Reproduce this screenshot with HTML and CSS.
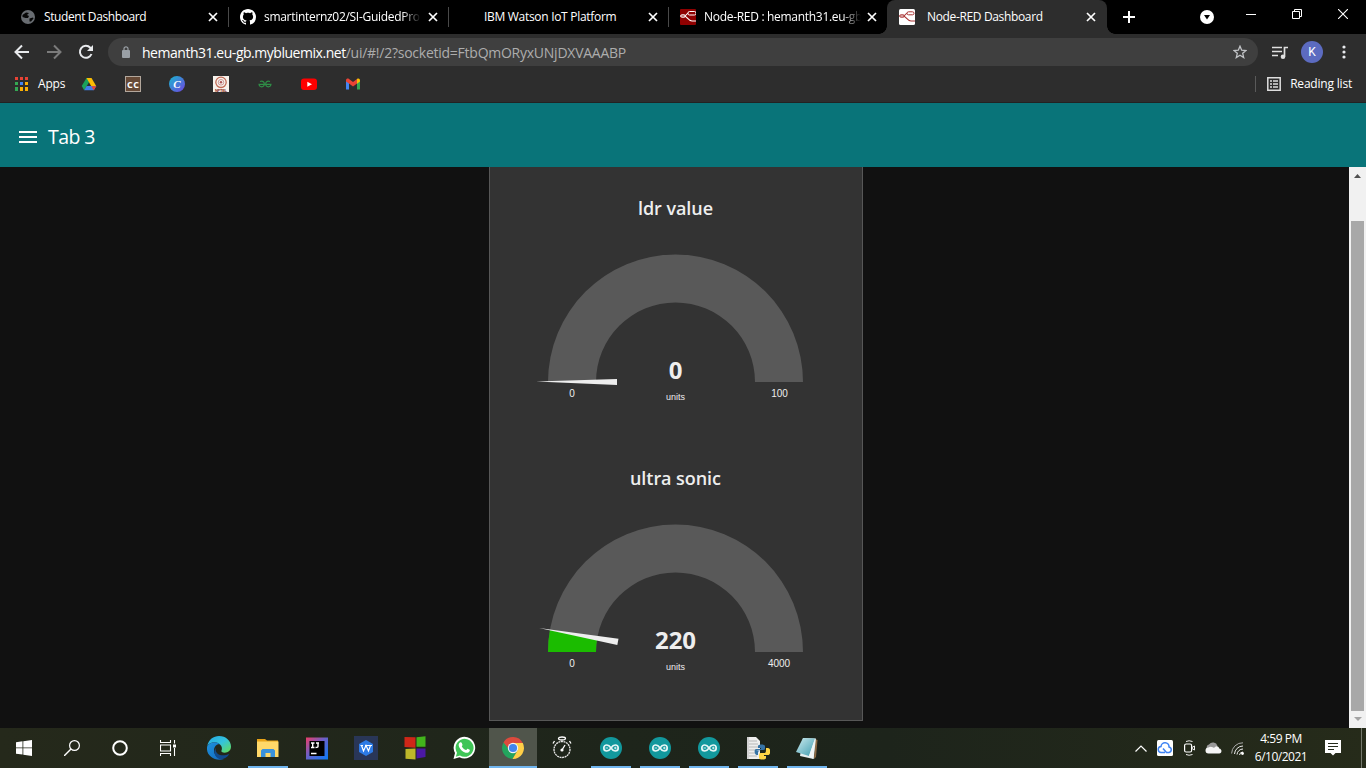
FILE: index.html
```html
<!DOCTYPE html>
<html lang="en">
<head>
<meta charset="utf-8">
<title>Node-RED Dashboard</title>
<link rel="stylesheet" href="styles.css">
</head>
<body>
<svg width="0" height="0" class="defs">
  <defs>
    <symbol id="close" viewBox="0 0 16 16"><path d="M4 4l8 8M12 4l-8 8" stroke="#fff" stroke-width="1.7" fill="none"/></symbol>
    <symbol id="arduino" viewBox="0 0 24 24"><circle cx="12" cy="12" r="11" fill="#12989d"/><path d="M12 12C10.500 9.700 9.200 9 7.800 9a3 3 0 0 0 0 6c1.400 0 2.700-.7 4.200-3s2.700-3 4.200-3a3 3 0 0 1 0 6c-1.500 0-2.700-.7-4.200-3z" fill="none" stroke="#e6f6f6" stroke-width="1.7"/><path d="M6.500 12h2.600M15 12h2.600M16.300 10.700v2.600" stroke="#e6f6f6" stroke-width=".9"/></symbol>
    <linearGradient id="edgeTop" x1="0" y1="0" x2="1" y2="1"><stop offset="0" stop-color="#24a8e4"/><stop offset=".5" stop-color="#34c3dd"/><stop offset="1" stop-color="#67e04f"/></linearGradient>
    <linearGradient id="edgeLow" x1="0" y1="0" x2="1" y2="1"><stop offset="0" stop-color="#1e91dc"/><stop offset="1" stop-color="#1268bd"/></linearGradient>
    <linearGradient id="canva" x1="0" y1="0" x2="1" y2="1"><stop offset="0" stop-color="#17b8cf"/><stop offset="1" stop-color="#7142e0"/></linearGradient>
    <linearGradient id="ij" x1="0" y1="0" x2="1" y2="1"><stop offset="0" stop-color="#ee3d68"/><stop offset=".45" stop-color="#6a60c8"/><stop offset="1" stop-color="#087cfa"/></linearGradient>
    <linearGradient id="note" x1="0" y1="0" x2="1" y2="1"><stop offset="0" stop-color="#cdebef"/><stop offset="1" stop-color="#3e9db0"/></linearGradient>
  </defs>
</svg>

<div class="tabstrip">
  <div class="tab">
    <svg class="fav" viewBox="0 0 16 16"><circle cx="8" cy="8" r="7" fill="#686c71"/><path d="M2.500 6l3.500-2.500 3 .5-2 2 2 1-1 2-2.500 0-3-1zM9.500 9.500l3.500-1 .5 1-2.500 3-1.500 0z" fill="#070707"/></svg>
    <span class="tab-title first">Student Dashboard</span><svg class="fav"><use href="#close"/></svg>
  </div>
  <div class="tab">
    <svg class="fav" viewBox="0 0 16 16"><path fill="#fff" d="M8 0C3.580 0 0 3.580 0 8c0 3.540 2.290 6.530 5.470 7.590.4.070.55-.17.55-.38 0-.19-.01-.82-.01-1.490-2.010.37-2.530-.49-2.690-.94-.09-.23-.48-.94-.82-1.130-.28-.15-.68-.52-.01-.53.63-.01 1.080.58 1.230.82.72 1.210 1.870.87 2.330.66.070-.52.28-.87.51-1.070-1.780-.2-3.640-.89-3.640-3.950 0-.87.31-1.590.82-2.150-.08-.2-.36-1.020.08-2.120 0 0 .67-.21 2.200.82.64-.18 1.320-.27 2-.27s1.360.09 2 .27c1.530-1.040 2.200-.82 2.200-.82.44 1.100.16 1.920.08 2.120.51.56.82 1.270.82 2.150 0 3.070-1.870 3.750-3.650 3.950.29.25.54.73.54 1.480 0 1.070-.01 1.930-.01 2.200 0 .21.15.46.55.38A8.010 8.010 0 0 0 16 8c0-4.420-3.580-8-8-8z"/></svg>
    <span class="tab-title fade">smartinternz02/SI-GuidedPro</span><svg class="fav"><use href="#close"/></svg>
  </div>
  <div class="tab">
    <span class="fav"></span>
    <span class="tab-title">IBM Watson IoT Platform</span><svg class="fav"><use href="#close"/></svg>
  </div>
  <div class="tab no-line">
    <svg class="fav" viewBox="0 0 16 16"><rect width="16" height="16" rx="1" fill="#8f0000"/><path d="M0 7h4c3 0 2-3 5-3M4 7c3 0 4 5 8 5h4" fill="none" stroke="#fff" stroke-width="1.100"/><rect x="8" y="2.500" width="8" height="3.500" rx="1.500" fill="#8f0000" stroke="#fff"/><rect x="1" y="5.500" width="4" height="3" rx="1" fill="none" stroke="#fff" stroke-width=".7"/></svg>
    <span class="tab-title fade">Node-RED : hemanth31.eu-gb</span><svg class="fav"><use href="#close"/></svg>
  </div>
  <div class="tab active">
    <svg class="fav" viewBox="0 0 16 16"><rect width="16" height="16" rx="1.500" fill="#fff"/><path d="M0 7h4c3 0 2-3 5-3M4 7c3 0 4 5 8 5h4" fill="none" stroke="#a33" stroke-width="1.100"/><rect x="8" y="2.800" width="7" height="3" rx="1.500" fill="#fff" stroke="#a33"/><rect x="1" y="5.500" width="4" height="3" rx="1" fill="none" stroke="#a33" stroke-width=".7"/></svg>
    <span class="tab-title">Node-RED Dashboard</span><svg class="fav"><use href="#close"/></svg>
  </div>
  <svg class="newtab" viewBox="0 0 12 12"><path d="M6 0v12M0 6h12" stroke="#fff" stroke-width="2"/></svg>
  <div class="winctl">
    <svg width="14" height="14" viewBox="0 0 14 14" class="down"><circle cx="7" cy="7" r="7" fill="#fff"/><path d="M4 5h6l-3 4.500z" fill="#000"/></svg>
    <svg width="10" height="10" viewBox="0 0 10 10"><path d="M0 5.500h10" stroke="#fff"/></svg>
    <svg width="10" height="10" viewBox="0 0 10 10"><path d="M.5 2.500h7v7h-7zM2.500 2.500v-2h7v7h-2" fill="none" stroke="#fff"/></svg>
    <svg width="10" height="10" viewBox="0 0 10 10"><path d="M0 0l10 10M10 0L0 10" stroke="#fff" stroke-width="1.100"/></svg>
  </div>
</div>

<div class="toolbar">
  <svg class="nav" viewBox="0 0 16 16"><path d="M15 8H2M8 1.500L1.500 8 8 14.500" fill="none" stroke="#e8eaed" stroke-width="2"/></svg>
  <svg class="nav" viewBox="0 0 16 16"><path d="M1 8h13M8 1.500L14.500 8 8 14.500" fill="none" stroke="#7b7b7b" stroke-width="2"/></svg>
  <svg class="nav" viewBox="0 0 16 16"><path d="M13.500 10A6 6 0 1 1 12.300 3.700L14 5.500" fill="none" stroke="#e8eaed" stroke-width="2"/><path d="M15 1v6H9z" fill="#e8eaed"/></svg>
  <div class="omnibox">
    <svg width="8" height="12" viewBox="0 0 8 12"><rect y="4" width="8" height="8" rx="1" fill="#9aa0a6"/><path d="M2 5V2.800a2 2 0 0 1 4 0V5" fill="none" stroke="#9aa0a6" stroke-width="1.200"/></svg>
    <span class="url"><b>hemanth31.eu-gb.mybluemix.net</b><span class="path">/ui/#!/2?socketid=FtbQmORyxUNjDXVAAABP</span></span>
    <svg width="14" height="14" viewBox="0 0 14 14"><path d="M7 1.200l1.700 4 4.300.3-3.300 2.800 1 4.200L7 10.200l-3.700 2.300 1-4.200L1 5.500l4.300-.3z" fill="none" stroke="#c2c4c7" stroke-width="1.300"/></svg>
  </div>
  <svg class="media" viewBox="0 0 16 13"><path d="M0 1.500h10M0 5.500h10M0 9.500h6M12.500 10.500V1.500H16" fill="none" stroke="#e0e0e0" stroke-width="1.700"/><circle cx="11" cy="10.700" r="2.300" fill="#e0e0e0"/></svg>
  <span class="avatar">K</span>
  <svg width="4" height="14" viewBox="0 0 4 14"><g fill="#e8eaed"><circle cx="2" cy="2" r="1.600"/><circle cx="2" cy="7" r="1.600"/><circle cx="2" cy="12" r="1.600"/></g></svg>
</div>

<div class="bookmarks">
  <svg width="13" height="14" viewBox="0 0 13 14"><path d="M0 0h3v3H0zM5 0h3v3H5zM10 0h3v3h-3z" fill="#e84335"/><path d="M0 5h3v3H0z" fill="#34a853"/><path d="M5 5h3v3H5z" fill="#4285f4"/><path d="M10 5h3v3h-3zM5 10h3v4H5zM10 10h3v4h-3z" fill="#fbb005"/><path d="M0 10h3v4H0z" fill="#34a853"/></svg>
  <span class="apps">Apps</span>
  <div class="bm-icons">
    <svg viewBox="0 0 16 16"><path d="M5.500 2h5L8 6.300 3.200 14.200.7 10z" fill="#1aa15a"/><path d="M5.500 2h5l4.800 8.200h-5z" fill="#fbbc04"/><path d="M3.200 14.200L5.600 10h9.700l-2.500 4.200z" fill="#3f7ee8"/><path d="M10.300 10.200h5l-2.500 4z" fill="#ea4335"/></svg>
    <svg viewBox="0 0 16 16"><rect x=".5" y=".5" width="15" height="15" fill="#664936" stroke="#b3a79c"/><text x="8" y="11.500" class="cc" text-anchor="middle" textLength="12">CC</text></svg>
    <svg viewBox="0 0 16 16"><circle cx="8" cy="8" r="8" fill="url(#canva)"/><text x="8" y="12" class="cv" text-anchor="middle">C</text></svg>
    <svg viewBox="0 0 16 16"><rect width="16" height="16" fill="#f7f2ec"/><circle cx="8" cy="6.300" r="5.200" fill="none" stroke="#c06a55" stroke-width="1.300"/><circle cx="8" cy="6.300" r="2.800" fill="none" stroke="#c99" stroke-width="1"/><circle cx="8" cy="6.300" r="1.200" fill="#a55"/><text x="8" y="15.500" class="np" text-anchor="middle" textLength="12">NPTEL</text></svg>
    <svg viewBox="0 0 16 16"><path d="M1.500 8.300h13M3 5.500c3-1 4.500.5 4.300 2.800-.3 3.500-5 3.200-5.300 0M13 5.500c-3-1-4.500.5-4.300 2.800.3 3.500 5 3.200 5.300 0" fill="none" stroke="#2f8d46" stroke-width="1.200"/></svg>
    <svg viewBox="0 0 16 16"><rect y="2.500" width="16" height="11.500" rx="3" fill="#f00"/><path d="M6.300 5.700v5L11 8.200z" fill="#fff"/></svg>
    <svg viewBox="0 0 16 16"><path d="M1 4v9.500h3V6.500z" fill="#4285f4"/><path d="M15 4v9.500h-3V6.500z" fill="#34a853"/><path d="M1 4.500C1 2.500 3 2.200 4 3l4 3 4-3v4.600L8 10.500 4 7.600 1 5.500z" fill="#ea4335"/><path d="M12 3c1.500-1 3-.3 3 1.500v1l-3 2.300z" fill="#fbbc04"/></svg>
  </div>
  <div class="reading">
    <svg width="14" height="14" viewBox="0 0 14 14"><path d="M.8.8h12.400v12.400H.8zM3 4h2M6 4h5M3 7h2M6 7h5M3 10h2M6 10h5" fill="none" stroke="#dedede" stroke-width="1.500"/></svg>
    <span>Reading list</span>
  </div>
</div>

<header class="appbar">
  <svg width="18" height="12" viewBox="0 0 18 12"><path d="M0 1h18M0 6h18M0 11h18" stroke="#fff" stroke-width="2"/></svg>
  <h1>Tab 3</h1>
</header>

<main class="page">
  <section class="card">
    <svg class="gauge" viewBox="0 0 372 270">
      <text class="g-title" x="185.500" y="48" textLength="75">ldr value</text>
      <path d="M58 215a127.500 127.500 0 0 1 255 0h-48a79.500 79.500 0 0 0-159 0z" fill="#595959"/>
      <path d="M46 214.500l81-2.500v6z" fill="#eee"/>
      <text class="g-value" x="185.500" y="212">0</text>
      <text class="g-label" x="82" y="230">0</text>
      <text class="g-label" x="289.500" y="230">100</text>
      <text class="g-unit" x="185.500" y="233">units</text>
    </svg>
    <svg class="gauge" viewBox="0 0 372 270">
      <text class="g-title" x="185.500" y="48" textLength="91">ultra sonic</text>
      <path d="M58 215a127.500 127.500 0 0 1 255 0h-48a79.500 79.500 0 0 0-159 0z" fill="#595959"/>
      <path d="M58 215a127.500 127.500 0 0 1 1.900-21.900l47.300 8.200A79.500 79.500 0 0 0 106 215z" fill="#1bbc00"/>
      <path d="M49 191l79.500 10.700-1.200 6.300z" fill="#eee"/>
      <text class="g-value" x="185.500" y="212">220</text>
      <text class="g-label" x="82" y="230">0</text>
      <text class="g-label" x="289" y="230">4000</text>
      <text class="g-unit" x="185.500" y="233">units</text>
    </svg>
  </section>
  <div class="scrollbar">
    <svg width="7" height="4" viewBox="0 0 7 4"><path d="M0 4h7L3.500 0z" fill="#505050"/></svg>
    <div class="thumb"></div>
    <svg width="8" height="4" viewBox="0 0 8 4"><path d="M0 0h8L4 4z" fill="#a3a3a3"/></svg>
  </div>
</main>

<footer class="taskbar">
  <div class="sys">
    <svg width="16" height="16" viewBox="0 0 16 16"><path d="M0 2.200l6.500-.9v6.200H0zM7.300 1.200L16 0v7.500H7.300zM0 8.300h6.500v6.300L0 13.700zM7.300 8.300H16V16l-8.700-1.200z" fill="#fff"/></svg>
    <svg width="16" height="16" viewBox="0 0 16 16"><circle cx="10.500" cy="5.500" r="4.900" fill="none" stroke="#fff" stroke-width="1.200"/><path d="M7 9L0 16" stroke="#fff" stroke-width="1.400"/></svg>
    <svg width="16" height="16" viewBox="0 0 16 16"><circle cx="8" cy="8" r="6.800" fill="none" stroke="#fff" stroke-width="2"/></svg>
    <svg width="16" height="16" viewBox="0 0 16 16"><path d="M.5 0v2.500h10V0M.5 16v-2.500h10V16M.5 5h10v6H.5zM14.500 0v3.500M14.500 8v8" fill="none" stroke="#fff" stroke-width="1.100"/><path d="M13 4.500h3v3h-3z" fill="#fff"/></svg>
  </div>
  <div class="tasks">
    <span class="task"><svg viewBox="0 0 24 24"><path d="M.3 10C1.500 3.500 6.500 0 12 0c7 0 12 5 12 10.500 0 4-3 6.200-6.200 6.200-2.600 0-4-1-3.300-2.200.8-1.500.7-4-1.500-6C9 5 3 6 .3 10z" fill="url(#edgeTop)"/><path d="M.3 10C3 5.500 10 5 13 8.500c-3-.8-6 2-6 6 0 5 5 9 10 8.500C8 26-2 19.500.3 10z" fill="url(#edgeLow)"/><path d="M8.800 12c-1.300 5.500 5 9.500 13.500 6C19.500 23 14 24.500 10.500 22 7 19.500 6.500 14.500 8.800 12z" fill="#114a8c"/></svg></span>
    <span class="task open"><svg viewBox="0 0 24 24"><path d="M1 3h8l2 1.500h11V21H1z" fill="#e9a317"/><path d="M1 5.500h21.500V21H1z" fill="#ffd869"/><path d="M5 21v-6.500L6.500 13h11L19 14.500V21h-4.500v-4h-5v4z" fill="#3a92dc"/></svg></span>
    <span class="task"><svg viewBox="0 0 24 24"><rect x="1" y="1.500" width="22" height="22" fill="url(#ij)"/><rect x="4.500" y="5" width="15" height="15" fill="#000"/><path d="M6 7h3.500M6 11.500h3.500M7.700 7v4.500M11 7h3M13 7v3.500q0 1-2.500 1M6 17.500h5.500" stroke="#fff" stroke-width="1.400" fill="none"/></svg></span>
    <span class="task"><svg viewBox="0 0 24 24"><rect width="24" height="24" fill="#293657"/><path d="M12 4l7 4v8l-7 4-7-4V8z" fill="#2d7be5"/><path d="M6.500 9.500h2.500M7.500 9.500l2 5.500 2.500-5.500 2.500 5.500 2-5.500M11 9.500h7" fill="none" stroke="#fff" stroke-width="1.200"/></svg></span>
    <span class="task"><svg viewBox="0 0 24 24"><path d="M1.500 1l11 .3v10.500L1.500 11z" fill="#cf2718"/><path d="M13.500 1.300l9-1v10.500h-9z" fill="#42b51c"/><path d="M2.500 13l10-.5v11l-10-.8z" fill="#bdb72a"/><path d="M13.500 12.500h9V21l-9 1.500z" fill="#4b18a5"/></svg></span>
    <span class="task"><svg viewBox="0 0 24 24"><path d="M1.500 23L3 17A10.800 10.800 0 1 1 7.500 21.300z" fill="#fff"/><path d="M3.800 20.800L5 16.700A9 9 0 1 1 8 19.600z" fill="#3fc557"/><path d="M8 6.500c1.500-1 2 .8 2.500 2.200.3.700-1 1.300-.6 1.900 1 1.800 2.300 2.800 4 3.500.6.200 1.200-1.600 1.800-1.300 3 1.300 2.200 1.500 1.700 2.700-.8 1.500-3 1.700-5 .8C9.500 15 7 11.700 6.700 9.500c-.1-1.200.4-2.300 1.300-3z" fill="#fff"/></svg></span>
    <span class="task open current"><svg viewBox="0 0 24 24"><path d="M2.500 6.500A11 11 0 0 0 11.500 23l5-8.500L12 12z" fill="#23a45d"/><path d="M12 7h9.800A11 11 0 0 1 11.500 23l5-8.500z" fill="#ffcf47"/><path d="M2.500 6.500A11 11 0 0 1 21.800 7H12l-5 5z" fill="#dc4a3d"/><circle cx="12" cy="12" r="5.200" fill="#f3f3f3"/><circle cx="12" cy="12" r="4.100" fill="#4285ee"/></svg></span>
    <span class="task"><svg viewBox="0 0 24 24"><circle cx="12" cy="13.500" r="8" fill="none" stroke="#e8e8e8" stroke-width="1.300" stroke-dasharray="2 .6"/><path d="M12 14l3-5M8.500 2.500C8.500.5 15.500.5 15.500 2.500S8.500 4.500 8.500 2.500M4.500 5L3 7.500M19.500 5L21 7.500" stroke="#fff" stroke-width="1.300" fill="none"/><circle cx="12" cy="14" r="1.600" fill="#fff"/></svg></span>
    <span class="task open late"><svg><use href="#arduino"/></svg></span>
    <span class="task open late"><svg><use href="#arduino"/></svg></span>
    <span class="task open late"><svg><use href="#arduino"/></svg></span>
    <span class="task open late"><svg viewBox="0 0 24 24"><path d="M1 1h9l4 4v18H1z" fill="#eee"/><path d="M3 5h8M3 8h9M3 11h9M3 14h6M3 17h6M3 20h8M2 1v22" stroke="#aaa" stroke-width=".8"/><path d="M10 14h7c2 0 2-1 2-2v-2c0-2-7-2-7 0v2h3v1H10c-2 0-2 6 1 6h1v-2c0-2 1-2 3-2z" fill="#3673a5"/><path d="M20 12h2c3 0 3 7 0 7h-4v1h2v2c0 2-7 2-7 0v-3c0-2 1-2 3-2h2c2 0 2-1 2-5z" fill="#ffd545"/></svg></span>
    <span class="task open late"><svg viewBox="0 0 24 24"><path d="M20 3l2.500 1-1.500 17-2 2z" fill="#8b6a45"/><path d="M8 2l13 .5L18.500 23 5 20z" fill="#e5eff0"/><path d="M8 2l12 .5L14 20 1 16z" fill="url(#note)"/><path d="M20 2.500L18.500 23 14 20z" fill="#f1f5f5"/></svg></span>
  </div>
  <div class="tray">
    <svg width="12" height="7" viewBox="0 0 12 7"><path d="M.5 6.500L6 1l5.500 5.500" fill="none" stroke="#fff" stroke-width="1.200"/></svg>
    <svg width="16" height="16" viewBox="0 0 16 16"><rect width="16" height="16" rx="1.500" fill="#fff"/><path d="M8 12.500H4.500a3 3 0 0 1-.5-6A4 4 0 0 1 12 7a2.800 2.800 0 0 1 0 5.500H9.500L6 8.500" fill="none" stroke="#3e83f4" stroke-width="1.500"/></svg>
    <svg width="12" height="16" viewBox="0 0 12 16"><rect x=".6" y="4" width="7" height="8" rx="1.500" fill="none" stroke="#fff" stroke-width="1.200"/><path d="M8 7.500l2.500-1.500v4L8 8.500M2 1.500Q5 0 8.500 1.500M2 14.500Q5 16 8.500 14.500" fill="none" stroke="#eee"/></svg>
    <svg width="17" height="12" viewBox="0 0 17 12"><path d="M3 8a3 3 0 0 1 1-5.500 4.800 4.800 0 0 1 8.500 1.500L8 8z" fill="#999"/><path d="M3.500 11.500a3 3 0 0 1 0-6C6 4 8 5.500 9 6c2-3 5-2 5.200.5 3 .3 3 5 0 5z" fill="#f5f5f5"/></svg>
    <svg width="13" height="13" viewBox="0 0 13 13"><g fill="none" stroke="#eee"><path d="M.6 11.500A11 11 0 0 1 12 .8" stroke="#aaa"/><path d="M3.500 12A8.500 8.500 0 0 1 12 4M6 12.500A6 6 0 0 1 12 7M8.500 13A3.500 3.500 0 0 1 12 10"/></g><circle cx="11.500" cy="11.500" r="1.400" fill="#fff"/></svg>
    <div class="clock"><span>4:59 PM</span><span class="date">6/10/2021</span></div>
    <svg width="16" height="16" viewBox="0 0 16 16"><path d="M0 0h16v13h-5.500L8 15.500 5.500 13H0z" fill="#fff"/><path d="M3 3.500h10M3 6.500h10M3 9.500h6" stroke="#252b1c"/></svg>
    <i class="peek"></i>
  </div>
</footer>
</body>
</html>
```
FILE: styles.css
```css
* { box-sizing: border-box; }
body {
  margin: 0;
  width: 1366px;
  height: 768px;
  overflow: hidden;
  display: flex;
  flex-direction: column;
  background: #111;
  color: #fff;
  font: 12px "Open Sans", "Noto Sans", sans-serif;
}
svg { display: block; flex: none; }
.defs { position: absolute; }

.tabstrip { height: 34px; flex: none; display: flex; background: #000; padding-left: 9px; }
.tab {
  width: 220px;
  height: 34px;
  flex: none;
  display: flex;
  align-items: center;
  padding-left: 11px;
  background: linear-gradient(#494949, #494949) right 7px / 1px 20px no-repeat;
}
.tab.no-line { width: 218px; background: none; }
.fav { width: 16px; height: 16px; flex: none; }
.tab-title {
  width: 156px;
  margin: 0 5px 0 8px;
  overflow: hidden;
  white-space: nowrap;
  letter-spacing: -0.3px;
  line-height: 18px;
}
.tab-title.first { letter-spacing: -0.4px; }
.tab.no-line .tab-title { margin-right: 4px; }
.fade {
  width: 160px;
  margin-right: 1px;
  -webkit-mask-image: linear-gradient(90deg, #000 138px, transparent 157px);
  mask-image: linear-gradient(90deg, #000 138px, transparent 157px);
}
.tab.no-line .fade { margin-right: 0; }
.tab.active { position: relative; background: #2d2d2d; padding-left: 12px; border-radius: 8px 8px 0 0; }
.tab.active::before,
.tab.active::after { content: ""; position: absolute; bottom: 0; width: 8px; height: 8px; }
.tab.active::before { left: -8px; background: radial-gradient(circle at 0 0, transparent 7.5px, #2d2d2d 8px); }
.tab.active::after { right: -8px; background: radial-gradient(circle at 100% 0, transparent 7.5px, #2d2d2d 8px); }
.tab.active .tab-title { width: 151px; margin-left: 12px; margin-right: 5px; letter-spacing: -0.35px; }
.tab.active .tab-title { margin-left: 12px; }
.newtab { width: 12px; height: 12px; margin: 11px 0 0 16px; }
.winctl { display: flex; align-items: center; margin-left: auto; padding: 0 18px 6px 0; gap: 36px; }
.winctl .down { margin-top: 6px; margin-right: -4px; }

.toolbar { height: 36px; flex: none; display: flex; align-items: center; background: #2d2d2d; padding: 0 20px 0 14px; }
.nav { width: 16px; height: 16px; margin-right: 16px; }
.omnibox {
  width: 1150px;
  height: 28px;
  margin-left: -2px;
  border-radius: 14px;
  background: #3f3f3f;
  display: flex;
  align-items: center;
  padding: 0 11px 0 14px;
}
.url { flex: 1; margin-left: 12px; font-size: 14px; letter-spacing: -0.25px; color: #adadad; white-space: nowrap; }
.url b { font-weight: 400; letter-spacing: -0.47px; color: #fff; }
.media { width: 16px; height: 13px; margin-left: 14px; }
.avatar {
  width: 22px;
  height: 22px;
  margin: 0 19px 0 13px;
  border-radius: 50%;
  background: #5c6bc0;
  line-height: 22px;
  text-align: center;
  font-family: Roboto, sans-serif;
}

.bookmarks {
  height: 33px;
  flex: none;
  display: flex;
  align-items: center;
  background: #2d2d2d;
  border-bottom: 1px solid #222;
  padding: 0 14px 4px 15px;
}
.apps { width: 28px; margin-left: 10px; letter-spacing: -0.2px; padding-bottom: 1px; }
.bm-icons { display: flex; gap: 28px; margin-left: 15px; }
.bm-icons svg { width: 16px; height: 16px; }
.cc { font: 700 9px "Open Sans", sans-serif; fill: #fff; }
.cv { font: italic 700 11px "Liberation Serif", serif; fill: #fff; }
.np { font: 700 4px "Liberation Sans", sans-serif; fill: #8a2a20; }
.reading { display: flex; align-items: center; gap: 9px; margin-left: auto; padding-left: 11px; border-left: 1px solid #5a5a5a; letter-spacing: -0.2px; white-space: nowrap; line-height: 16px; }

.appbar { height: 64px; flex: none; display: flex; align-items: center; gap: 11px; padding: 4px 0 0 19px; background: #097479; }
.appbar h1 { margin: 0; padding-bottom: 2px; font-size: 19.5px; font-weight: 400; letter-spacing: -0.6px; }

.page { flex: 1; display: flex; min-height: 0; padding-left: 489px; }
.card { width: 374px; height: 554px; flex: none; border: 1px solid #575757; border-top: 0; background: #333; overflow: hidden; }
.gauge { width: 372px; height: 270px; }
.gauge text { fill: #eee; text-anchor: middle; }
.g-title { font: 600 18px "Open Sans", sans-serif; }
.g-value { font: 700 24px "Open Sans", sans-serif; }
.g-label { font: 10px "Liberation Sans", Arial, sans-serif; }
.g-unit { font: 9px "Liberation Sans", Arial, sans-serif; }
.scrollbar { width: 17px; margin-left: auto; background: #f1f1f1; display: flex; flex-direction: column; align-items: center; padding-top: 7px; }
.thumb { width: 13px; height: 490px; margin: 43px 0 6px; background: #a8a8a8; }

.taskbar { height: 40px; flex: none; display: flex; background: linear-gradient(90deg, #25291b, #1e251b 45%, #1d241b 65%, #262b1a); }
.sys { display: grid; grid-template-columns: repeat(4, 48px); place-items: center; margin-right: 3px; }
.tasks { display: flex; gap: 1px; }
.task { width: 48px; display: grid; place-items: center; }
.task svg { width: 24px; height: 24px; }
.task.open { background: linear-gradient(#70b5ee, #70b5ee) 4px 100% / 40px 2px no-repeat; }
.task.open.current { background: linear-gradient(#70b5ee, #70b5ee) 0 100% / 48px 2px no-repeat #50554b; }
.tray { display: flex; align-items: center; margin-left: auto; }
.tray svg:nth-of-type(1) { margin-right: 10px; }
.tray svg:nth-of-type(2) { margin-right: 11px; }
.tray svg:nth-of-type(3) { margin-right: 9px; }
.tray svg:nth-of-type(4) { margin-right: 9px; }
.clock { width: 60px; margin: 0 14px 0 7px; display: flex; flex-direction: column; align-items: center; line-height: 18px; letter-spacing: -0.45px; white-space: nowrap; }
.date { letter-spacing: -0.5px; }
.peek { width: 1px; height: 40px; margin: 0 4px 0 20px; background: #74786c; }
```
